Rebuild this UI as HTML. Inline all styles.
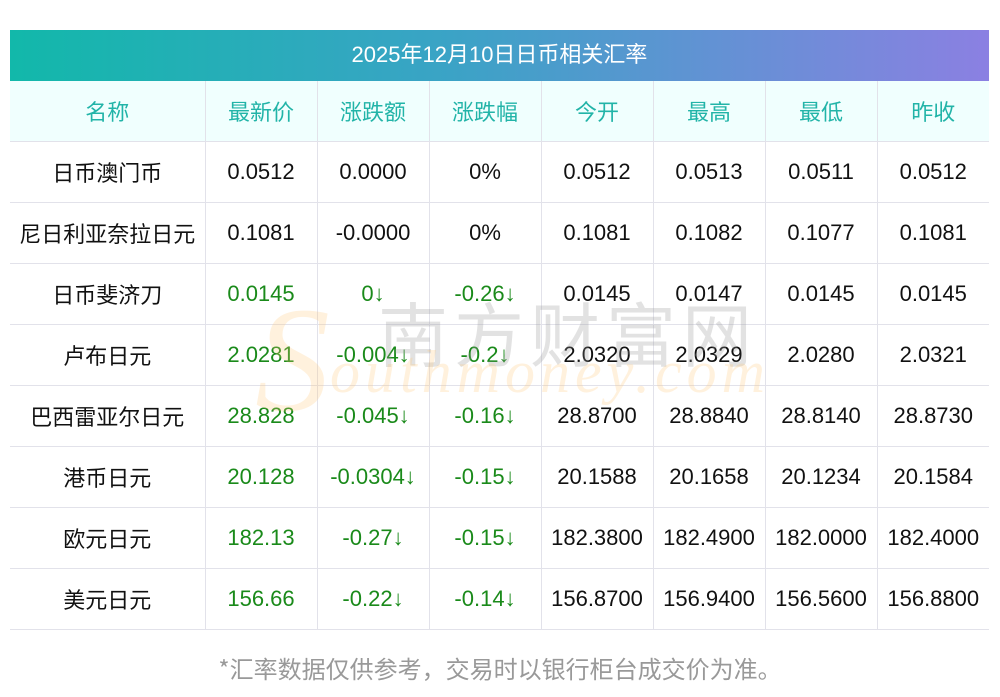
<!DOCTYPE html>
<html><head><meta charset="utf-8"><style>
body{margin:0;width:1000px;height:697px;background:#fff;font-family:"Liberation Sans","Noto Sans CJK SC",sans-serif;position:relative;overflow:hidden}
.bar{position:absolute;left:10px;top:30px;width:979px;height:51px;background:linear-gradient(90deg,#12b8aa,#3ba3c6 45%,#8b80e2);color:#fff;font-size:22px;line-height:49px;text-align:center}
table{position:absolute;left:10px;top:81px;width:979px;border-collapse:collapse;table-layout:fixed}
td{height:60px;border:1px solid #e2e2ea;text-align:center;font-size:22px;color:#111;padding:0;line-height:24px}
.c{font-family:"Noto Sans CJK SC",sans-serif;font-size:22px;line-height:24px}
tr td:first-child{border-left:none}tr td:last-child{border-right:none}
tr:first-child td{border-top:none;background:#f0fffe;color:#22b4a8}
.g{color:#1a8a1a}
.wm{position:absolute;left:378px;top:293px;font-size:70px;color:rgba(150,150,150,.28);letter-spacing:6px;font-family:"Noto Sans CJK SC",sans-serif;font-weight:normal;z-index:2;line-height:1.1}
.wm2{position:absolute;left:330px;top:338px;font-size:60px;font-style:italic;font-family:"Liberation Serif",serif;color:rgba(255,200,120,.25);letter-spacing:5px;z-index:2}
.s{position:absolute;left:255px;top:285px;font-size:150px;font-style:italic;font-family:"Liberation Serif",serif;color:rgba(255,200,120,.25);z-index:2;line-height:1}
.foot{position:absolute;top:650px;left:0;width:1000px;text-align:center;color:#999;font-size:24px;font-family:"Noto Sans CJK SC",sans-serif}
</style></head><body>
<div class="bar">2025年12月10日日币相关汇率</div>
<table>
<colgroup><col style="width:195px"><col style="width:112px"><col style="width:112px"><col style="width:112px"><col style="width:112px"><col style="width:112px"><col style="width:112px"><col style="width:112px"></colgroup>
<tr class="c"><td class="c">名称</td><td class="c">最新价</td><td class="c">涨跌额</td><td class="c">涨跌幅</td><td class="c">今开</td><td class="c">最高</td><td class="c">最低</td><td class="c">昨收</td></tr>
<tr><td class="c">日币澳门币</td><td>0.0512</td><td>0.0000</td><td>0%</td><td>0.0512</td><td>0.0513</td><td>0.0511</td><td>0.0512</td></tr>
<tr><td class="c">尼日利亚奈拉日元</td><td>0.1081</td><td>-0.0000</td><td>0%</td><td>0.1081</td><td>0.1082</td><td>0.1077</td><td>0.1081</td></tr>
<tr><td class="c">日币斐济刀</td><td class="g">0.0145</td><td class="g">0↓</td><td class="g">-0.26↓</td><td>0.0145</td><td>0.0147</td><td>0.0145</td><td>0.0145</td></tr>
<tr><td class="c">卢布日元</td><td class="g">2.0281</td><td class="g">-0.004↓</td><td class="g">-0.2↓</td><td>2.0320</td><td>2.0329</td><td>2.0280</td><td>2.0321</td></tr>
<tr><td class="c">巴西雷亚尔日元</td><td class="g">28.828</td><td class="g">-0.045↓</td><td class="g">-0.16↓</td><td>28.8700</td><td>28.8840</td><td>28.8140</td><td>28.8730</td></tr>
<tr><td class="c">港币日元</td><td class="g">20.128</td><td class="g">-0.0304↓</td><td class="g">-0.15↓</td><td>20.1588</td><td>20.1658</td><td>20.1234</td><td>20.1584</td></tr>
<tr><td class="c">欧元日元</td><td class="g">182.13</td><td class="g">-0.27↓</td><td class="g">-0.15↓</td><td>182.3800</td><td>182.4900</td><td>182.0000</td><td>182.4000</td></tr>
<tr><td class="c">美元日元</td><td class="g">156.66</td><td class="g">-0.22↓</td><td class="g">-0.14↓</td><td>156.8700</td><td>156.9400</td><td>156.5600</td><td>156.8800</td></tr>
</table>
<div class="s">S</div>
<div class="wm">南方财富网</div>
<div class="wm2">outhmoney.com</div>
<div class="foot">*汇率数据仅供参考，交易时以银行柜台成交价为准。</div>
</body></html>
